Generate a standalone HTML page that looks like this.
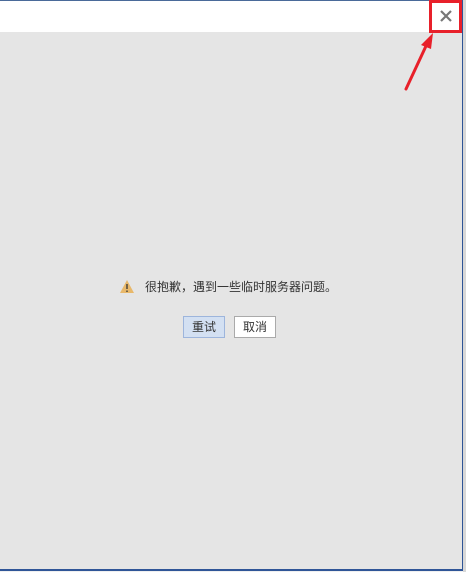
<!DOCTYPE html>
<html><head><meta charset="utf-8"><style>
body{margin:0;width:466px;height:572px;background:#f0f0f0;position:relative;overflow:hidden;font-family:"Liberation Sans","Noto Sans CJK SC",sans-serif}
.win{position:absolute;left:0;top:0;width:462px;height:569px;background:#e5e5e5;border-right:2px solid #2f5597;border-bottom:2px solid #2f5597}
.top{position:absolute;left:0;top:0;width:462px;height:31px;background:#fff;border-top:1px solid #4a6a99}
.btn{position:absolute;top:316px;height:20px;width:40px;font-size:12px;line-height:20px;text-align:center;color:#333}
</style></head><body>
<div class="win"></div>
<div class="top"></div>
<div style="position:absolute;left:463px;top:0;width:3px;height:572px;background:#d8d8d8"></div>
<div style="position:absolute;left:429px;top:0;width:27px;height:27px;border:3px solid #e8202a"></div>
<svg style="position:absolute;left:0;top:0" width="466" height="572">
<path d="M441 11L451 21M451 11L441 21" stroke="#777" stroke-width="2.2"/>
<path d="M406 89L426 46" stroke="#e8202a" stroke-width="3" stroke-linecap="round"/>
<path d="M433 33L421 45L431 49Z" fill="#e8202a"/>
<path d="M127 280L134 293H120Z" fill="#e8b86a"/>
<path d="M127 284V289M127 290.5V292" stroke="#333" stroke-width="1.3"/>
</svg>
<div style="position:absolute;left:145px;top:278px;font-size:12px;color:#333;white-space:nowrap">很抱歉，遇到一些临时服务器问题。</div>
<div class="btn" style="left:183px;background:#d3e0f2;border:1px solid #9db5dc">重试</div>
<div class="btn" style="left:234px;background:#fff;border:1px solid #aaa">取消</div>
</body></html>
